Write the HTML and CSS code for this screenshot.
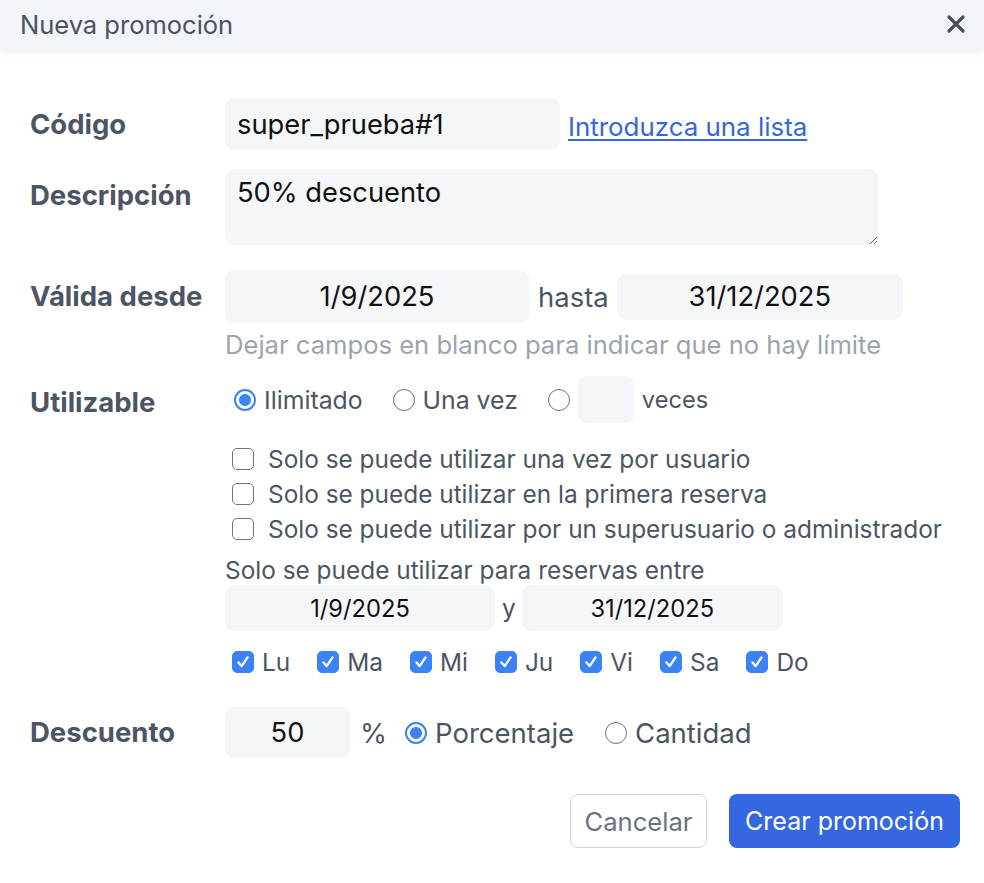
FILE: index.html
```html
<!DOCTYPE html>
<html lang="es">
<head>
<meta charset="utf-8">
<title>Nueva promoción</title>
<link rel="stylesheet" href="styles.css">
</head>
<body>
<div class="modal">
  <header class="modal-header">
    <h1 class="modal-title">Nueva promoción</h1>
    <svg class="close" width="20" height="20" viewBox="0 0 20 20"><path d="M3 3 L17 17 M17 3 L3 17" stroke="#4b5058" stroke-width="3.2" stroke-linecap="round"/></svg>
  </header>
  <form class="form">
    <label class="label l-codigo">Código</label>
    <div class="ctrl row-codigo">
      <input class="field f-codigo" type="text" value="super_prueba#1">
      <a class="link" href="#">Introduzca una lista</a>
    </div>

    <label class="label l-desc">Descripción</label>
    <div class="ctrl row-desc">
      <textarea class="field f-desc">50% descuento</textarea>
    </div>

    <label class="label l-valida">Válida desde</label>
    <div class="ctrl row-valida">
      <div class="date-row">
        <input class="field center f-desde" type="text" value="1/9/2025">
        <span class="txt hasta">hasta</span>
        <input class="field center f-hasta" type="text" value="31/12/2025">
      </div>
      <p class="help">Dejar campos en blanco para indicar que no hay límite</p>
    </div>

    <label class="label l-util">Utilizable</label>
    <div class="ctrl row-util">
      <div class="radio-row">
        <span class="opt"><span class="radio checked"></span><span class="txt rtxt">Ilimitado</span></span>
        <span class="opt"><span class="radio"></span><span class="txt rtxt">Una vez</span></span>
        <span class="opt"><span class="radio"></span><input class="field f-veces" type="text" value=""><span class="txt rtxt veces">veces</span></span>
      </div>
      <div class="checks">
        <span class="check-line"><span class="cb"></span><span class="txt">Solo se puede utilizar una vez por usuario</span></span>
        <span class="check-line"><span class="cb"></span><span class="txt">Solo se puede utilizar en la primera reserva</span></span>
        <span class="check-line"><span class="cb"></span><span class="txt">Solo se puede utilizar por un superusuario o administrador</span></span>
      </div>
      <p class="txt entre">Solo se puede utilizar para reservas entre</p>
      <div class="date-row res">
        <input class="field center f-res1" type="text" value="1/9/2025">
        <span class="txt y">y</span>
        <input class="field center f-res2" type="text" value="31/12/2025">
      </div>
      <div class="days">
        <span class="day"><span class="cb on"><svg viewBox="0 0 22 22"><path d="M6 11.5 L9.5 15.5 L16 6" fill="none" stroke="#fff" stroke-width="2.6" stroke-linecap="round" stroke-linejoin="round"/></svg></span><span class="txt">Lu</span></span>
        <span class="day"><span class="cb on"><svg viewBox="0 0 22 22"><path d="M6 11.5 L9.5 15.5 L16 6" fill="none" stroke="#fff" stroke-width="2.6" stroke-linecap="round" stroke-linejoin="round"/></svg></span><span class="txt">Ma</span></span>
        <span class="day"><span class="cb on"><svg viewBox="0 0 22 22"><path d="M6 11.5 L9.5 15.5 L16 6" fill="none" stroke="#fff" stroke-width="2.6" stroke-linecap="round" stroke-linejoin="round"/></svg></span><span class="txt">Mi</span></span>
        <span class="day"><span class="cb on"><svg viewBox="0 0 22 22"><path d="M6 11.5 L9.5 15.5 L16 6" fill="none" stroke="#fff" stroke-width="2.6" stroke-linecap="round" stroke-linejoin="round"/></svg></span><span class="txt">Ju</span></span>
        <span class="day"><span class="cb on"><svg viewBox="0 0 22 22"><path d="M6 11.5 L9.5 15.5 L16 6" fill="none" stroke="#fff" stroke-width="2.6" stroke-linecap="round" stroke-linejoin="round"/></svg></span><span class="txt">Vi</span></span>
        <span class="day"><span class="cb on"><svg viewBox="0 0 22 22"><path d="M6 11.5 L9.5 15.5 L16 6" fill="none" stroke="#fff" stroke-width="2.6" stroke-linecap="round" stroke-linejoin="round"/></svg></span><span class="txt">Sa</span></span>
        <span class="day"><span class="cb on"><svg viewBox="0 0 22 22"><path d="M6 11.5 L9.5 15.5 L16 6" fill="none" stroke="#fff" stroke-width="2.6" stroke-linecap="round" stroke-linejoin="round"/></svg></span><span class="txt">Do</span></span>
      </div>
    </div>

    <label class="label l-desc2">Descuento</label>
    <div class="ctrl row-descuento">
      <input class="field center f-pct" type="text" value="50">
      <span class="txt big pct">%</span>
      <span class="opt"><span class="radio checked"></span><span class="txt big">Porcentaje</span></span>
      <span class="opt"><span class="radio"></span><span class="txt big">Cantidad</span></span>
    </div>
  </form>
  <footer class="actions">
    <button class="btn btn-cancel" type="button">Cancelar</button>
    <button class="btn btn-primary" type="button">Crear promoción</button>
  </footer>
</div>
</body>
</html>
```
FILE: styles.css
```css
* { box-sizing: border-box; }
html, body { margin: 0; padding: 0; background: #fff; }
body {
  font-family: Inter, "Noto Sans", "Liberation Sans", sans-serif;
  color: #4b5563;
  width: 984px;
  height: 883px;
  overflow: hidden;
}
.modal { width: 984px; }
.modal-header {
  height: 50px;
  background: #f1f4f8;
  display: flex;
  align-items: center;
  justify-content: space-between;
  padding: 0 18px 0 20px;
  box-shadow: 0 3px 6px rgba(200, 205, 215, 0.25);
}
.modal-title {
  margin: 0;
  font-size: 25.5px;
  font-weight: 400;
  color: #4a5260;
  line-height: 30px;
}
.close { display: block; margin-top: -2px; }

.form {
  display: grid;
  grid-template-columns: 195px 1fr;
  padding: 48px 0 0 30px;
  align-items: start;
}
.label {
  font-size: 27.5px;
  font-weight: 700;
  color: #4b5563;
  line-height: 30px;
}
.ctrl { display: flex; }
.txt { font-size: 24.4px; color: #4b5563; line-height: 30px; }
.big { font-size: 27.5px; }

.field {
  background: #f4f6f9;
  border: none;
  border-radius: 9px;
  font-family: inherit;
  color: #111;
  font-size: 27.3px;
  outline: none;
  padding: 0 12px;
  margin: 0;
}
.center { text-align: center; }

/* Código */
.l-codigo { margin-top: 11px; }
.row-codigo { align-items: center; }
.f-codigo { width: 335px; height: 52px; }
.link {
  margin-left: 8px;
  font-size: 25.9px;
  color: #3567d8;
  text-decoration: underline;
  text-decoration-thickness: 1.5px;
  text-underline-offset: 3px;
  margin-top: 4px;
}

/* Descripción */
.l-desc, .row-desc { margin-top: 19px; }
.l-desc { padding-top: 11px; }
.f-desc {
  width: 653px;
  height: 76px;
  resize: vertical;
  padding: 8px 12px;
  line-height: 32px;
}

/* Válida */
.l-valida, .row-valida { margin-top: 25px; }
.l-valida { padding-top: 11px; }
.row-valida { flex-direction: column; }
.date-row { display: flex; align-items: center; }
.f-desde { width: 304px; height: 53px; }
.hasta { margin: 0 8px 0 9px; font-size: 27.5px; }
.f-hasta { width: 286px; height: 46px; }
.help {
  margin: 9px 0 0 0;
  font-size: 25.6px;
  color: #9ca3af;
  line-height: 26px;
}

/* Utilizable */
.l-util, .row-util { margin-top: 18px; }
.l-util { padding-top: 11px; }
.row-util { flex-direction: column; }
.radio-row { display: flex; align-items: center; height: 47px; padding-left: 9px; }
.rtxt { font-size: 24.8px; }
.opt { display: inline-flex; align-items: center; margin-right: 30px; }
.radio {
  width: 22px; height: 22px;
  border-radius: 50%;
  border: 1.5px solid #6b7280;
  background: #fff;
  margin-right: 8px;
  flex: none;
}
.radio.checked {
  border: 2px solid #3b82f6;
  background: radial-gradient(circle, #3b82f6 0 5.5px, #fff 6.5px);
}
.f-veces { width: 56px; height: 47px; margin: 0 8px 0 0; }
.veces { font-size: 23.6px; }

.checks { display: flex; flex-direction: column; margin-top: 18px; padding-left: 7px; }
.check-line { display: flex; align-items: center; height: 35px; }
.check-line .txt { margin-left: 14px; }
.cb {
  width: 22px; height: 22px;
  border-radius: 5px;
  border: 1.5px solid #6b7280;
  background: #fff;
  flex: none;
  display: inline-flex;
}
.cb.on { background: #3b82f6; border-color: #3b82f6; }
.cb svg { width: 100%; height: 100%; }

.entre { margin: 11px 0 0 0; line-height: 26px; }
.date-row.res { margin-top: 2px; }
.f-res1 { width: 270px; height: 46px; font-size: 23.7px; }
.y { margin: 0 6px 0 7px; }
.f-res2 { width: 261px; height: 46px; font-size: 23.7px; }

.days { display: flex; align-items: center; margin-top: 16px; padding-left: 7px; height: 30px; }
.day { display: inline-flex; align-items: center; margin-right: 27px; }
.day .txt { margin-left: 8px; }

/* Descuento */
.l-desc2, .row-descuento { margin-top: 30px; }
.l-desc2 { padding-top: 10px; }
.row-descuento { align-items: center; }
.f-pct { width: 125px; height: 51px; }
.pct { margin: 0 18px 0 10px; }
.row-descuento .opt { margin-right: 31px; }

/* Footer */
.actions {
  display: flex;
  justify-content: flex-end;
  gap: 22px;
  padding: 36px 24px 0 0;
}
.btn {
  font-family: inherit;
  font-size: 25px;
  height: 54px;
  border-radius: 8px;
  padding: 0 10px;
  cursor: pointer;
}
.btn-cancel {
  width: 137px;
  background: #fff;
  color: #6b7280;
  border: 1.5px solid #cfd3d9;
  font-size: 25.6px;
}
.btn-primary {
  width: 231px;
  background: #3568e0;
  color: #fff;
  border: none;
}
```
